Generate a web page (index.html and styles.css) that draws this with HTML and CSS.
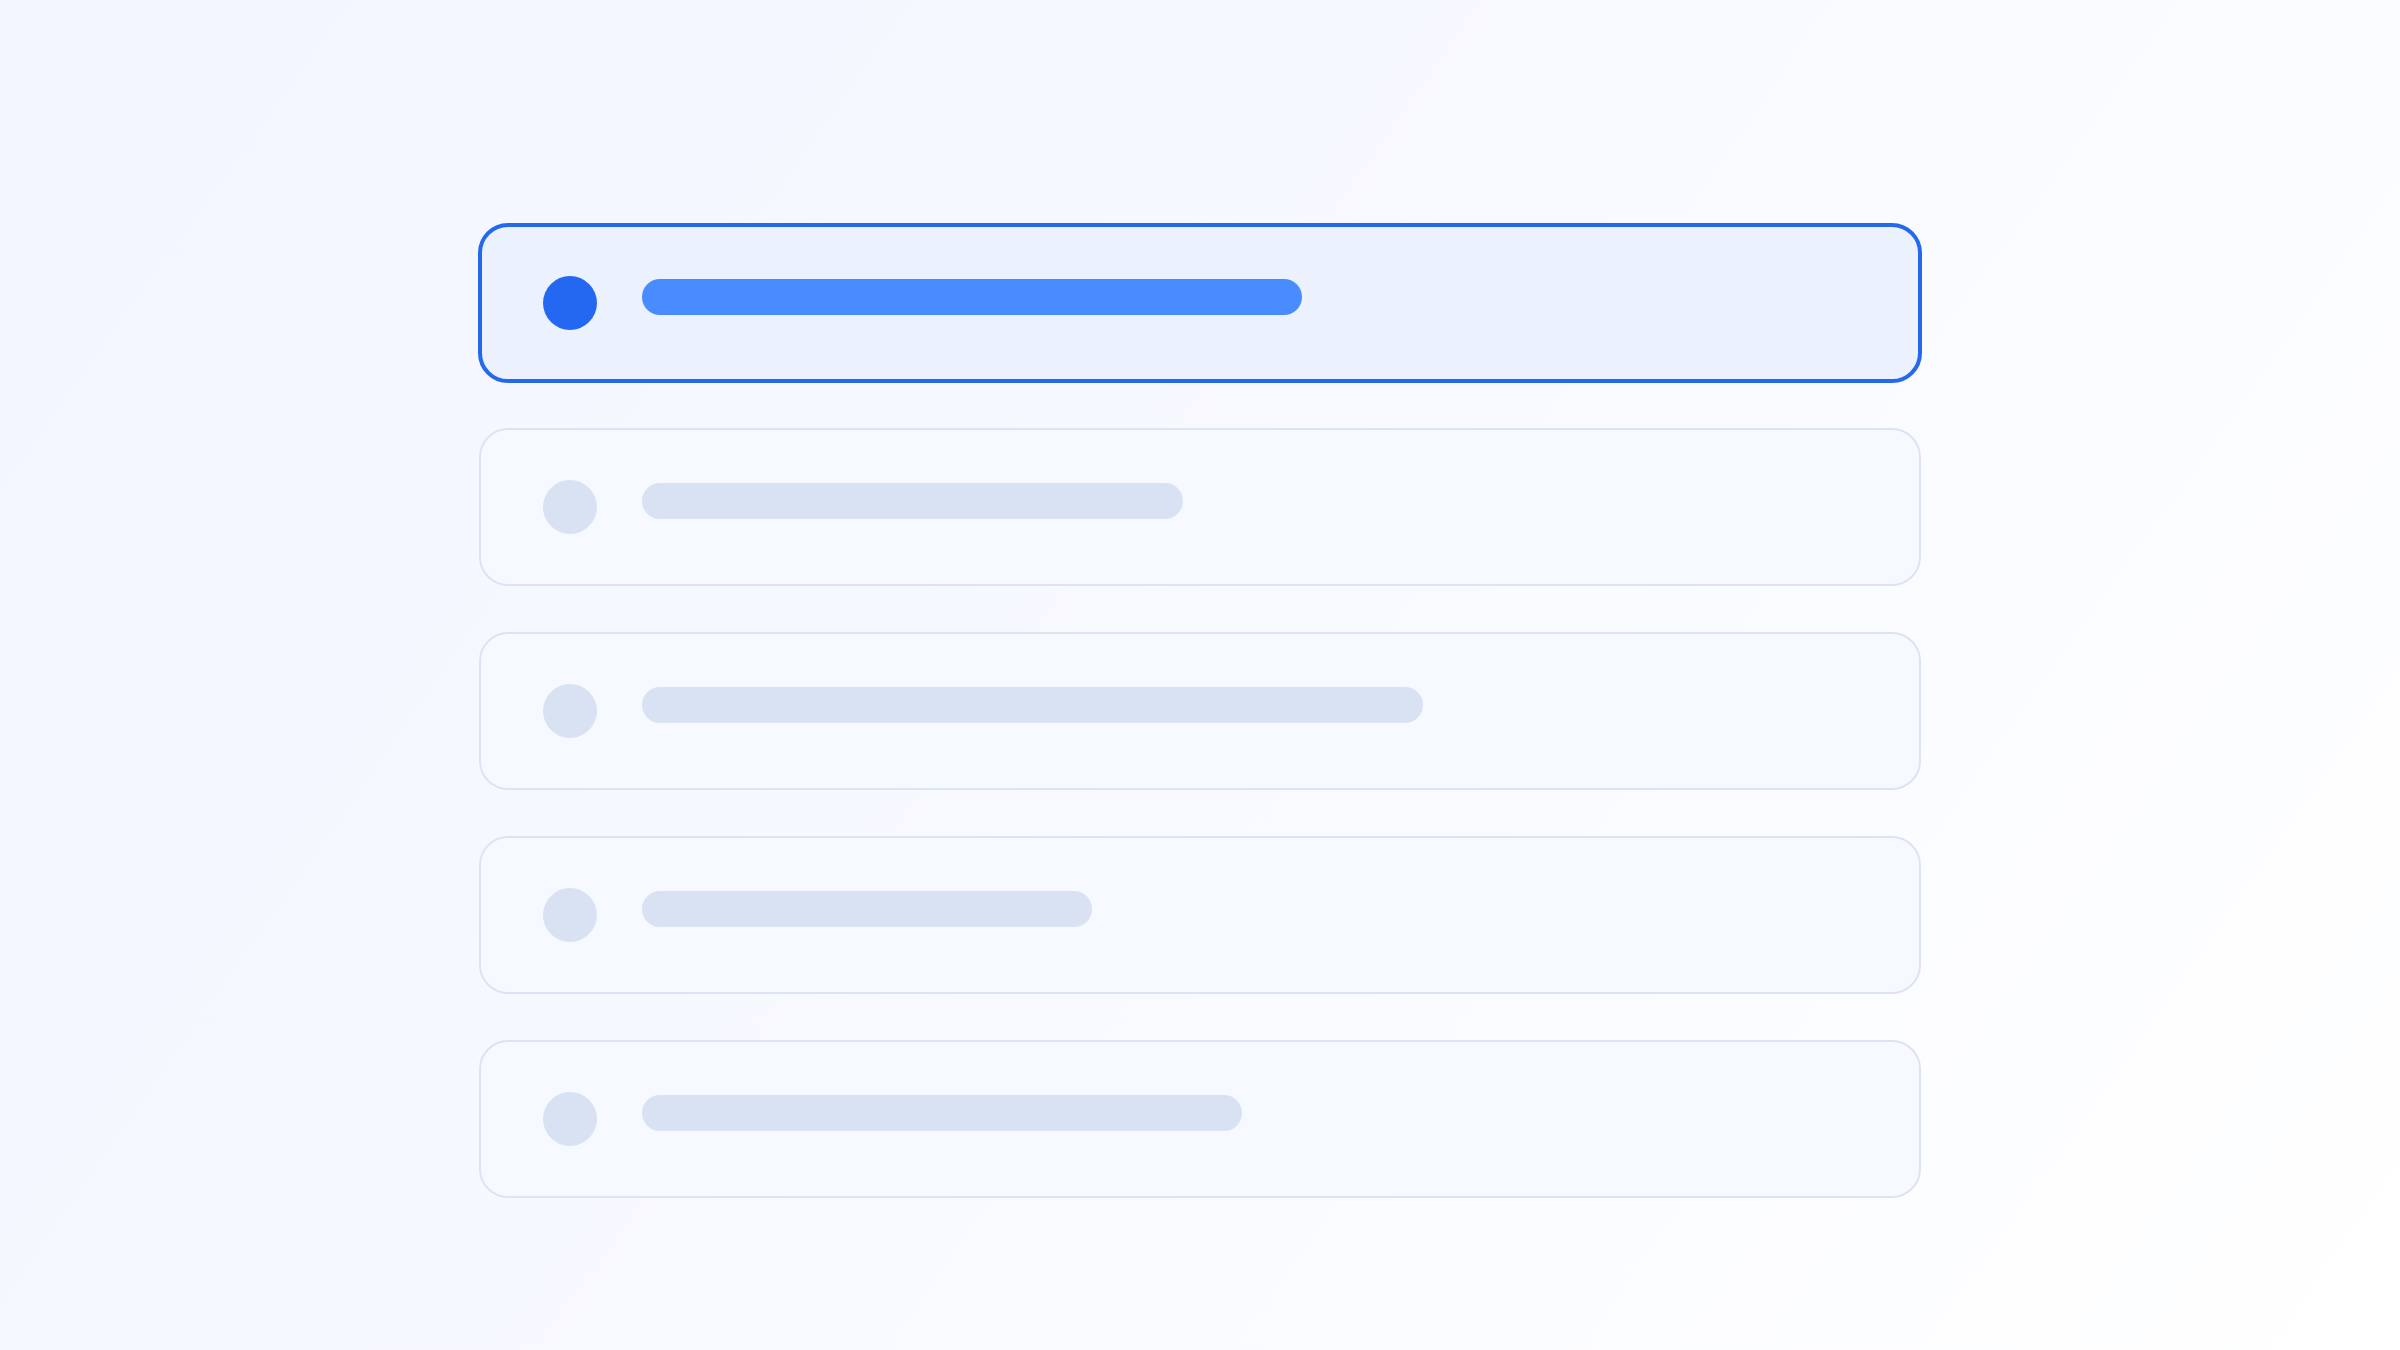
FILE: index.html
```html
<!DOCTYPE html>
<html lang="en">
<head>
<meta charset="utf-8">
<title>List</title>
<link rel="stylesheet" href="styles.css">
</head>
<body>
  <main class="page">
    <ul class="list">
      <li class="item item--active">
        <span class="dot"></span>
        <span class="bar" style="width:660px"></span>
      </li>
      <li class="item">
        <span class="dot"></span>
        <span class="bar" style="width:541px"></span>
      </li>
      <li class="item">
        <span class="dot"></span>
        <span class="bar" style="width:781px"></span>
      </li>
      <li class="item">
        <span class="dot"></span>
        <span class="bar" style="width:450px"></span>
      </li>
      <li class="item">
        <span class="dot"></span>
        <span class="bar" style="width:600px"></span>
      </li>
    </ul>
  </main>
</body>
</html>
```

FILE: styles.css
```css
* {
  box-sizing: border-box;
}

html,
body {
  margin: 0;
  height: 100%;
}

body {
  font-family: "Inter", "Liberation Sans", sans-serif;
  background: linear-gradient(125deg, #f2f6ff 0%, #f7f9ff 45%, #ffffff 100%);
}

.page {
  display: flex;
  justify-content: center;
  padding-top: 223px;
}

.list {
  list-style: none;
  margin: 0;
  padding: 0;
  width: 1444px;
  display: flex;
  flex-direction: column;
  gap: 44px;
}

/* plain rows sit 1px inside the active row's outer edge */
.item {
  height: 158px;
  margin: 1px;
  display: flex;
  align-items: center;
  padding: 0 62px;
  border: 2px solid #dce4f3;
  border-radius: 29px;
  background: #f6f9ff;
}

.item--active {
  height: 160px;
  margin: 0;
  border: 4px solid #2468f0;
  padding: 0 61px;
  border-radius: 30px;
  background: #ebf2fe;
}

.dot {
  flex: none;
  width: 54px;
  height: 54px;
  border-radius: 50%;
  background: #d8e2f3;
}

.bar {
  flex: none;
  height: 36px;
  margin-left: 45px;
  margin-bottom: 12px;
  border-radius: 18px;
  background: #d8e2f3;
}

.item--active .dot {
  background: #2468f2;
}

.item--active .bar {
  background: #488cff;
}
```
